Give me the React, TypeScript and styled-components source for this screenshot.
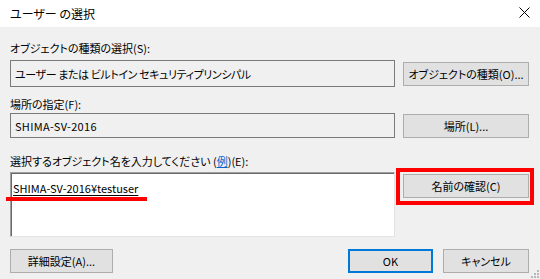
import React from 'react';
import styled, { createGlobalStyle, css } from 'styled-components';

const GlobalStyle = createGlobalStyle`
  html, body {
    margin: 0;
    padding: 0;
    background: #f0f0f0;
  }
  body {
    font-family: 'Noto Sans CJK JP', sans-serif;
    font-size: 11px;
    font-feature-settings: 'palt';
    color: #000;
  }
`;

const Window = styled.div`
  position: relative;
  width: 540px;
  height: 279px;
  background: #f0f0f0;
  overflow: hidden;
`;

const TitleBar = styled.div`
  display: flex;
  align-items: center;
  justify-content: space-between;
  height: 27px;
  padding: 0 8px 0 10px;
  background: #fff;
`;

const Title = styled.div`
  font-size: 12px;
  line-height: 16px;
`;

const CloseButton = styled.div`
  display: flex;
  align-items: center;
  justify-content: center;
  width: 16px;
  height: 16px;
  margin-top: -3px;
`;

const Body = styled.div`
  display: flex;
  flex-direction: column;
  padding: 0 11px 0 10px;
`;

const Field = styled.div<{ top: number }>`
  display: flex;
  flex-direction: column;
  margin-top: ${(p) => p.top}px;
`;

const Label = styled.div<{ gap: number }>`
  height: 16px;
  line-height: 16px;
  white-space: nowrap;
  margin-bottom: ${(p) => p.gap}px;
`;

const Row = styled.div`
  display: grid;
  grid-template-columns: 385px 126px;
  column-gap: 8px;
  align-items: center;
`;

const ReadOnlyBox = styled.div<{ h: number; spacing?: number }>`
  box-sizing: border-box;
  height: ${(p) => p.h}px;
  padding: 0 4px;
  display: flex;
  align-items: center;
  white-space: nowrap;
  letter-spacing: ${(p) => p.spacing ?? 0}px;
  border: 1px solid #7a7a7a;
  background: #f0f0f0;
`;

const InputBox = styled.div`
  position: relative;
  box-sizing: border-box;
  height: 65px;
  padding: 7px 3px 0 2px;
  background: #fff;
  border-top: 1px solid #a0a0a0;
  border-left: 1px solid #a0a0a0;
  border-right: 1px solid #e3e3e3;
  border-bottom: 1px solid #e3e3e3;
  box-shadow: inset 1px 1px 0 #696969;
`;

const ResolvedName = styled.span`
  text-decoration: underline;
  text-underline-offset: 2px;
`;

const RedUnderline = styled.div`
  position: absolute;
  left: -5px;
  top: 24px;
  width: 141px;
  height: 4px;
  background: #ff0000;
`;

const Button = styled.div<{ primary?: boolean; w?: number }>`
  position: relative;
  box-sizing: border-box;
  height: 24px;
  width: ${(p) => (p.w ? `${p.w}px` : 'auto')};
  display: flex;
  align-items: center;
  justify-content: center;
  white-space: nowrap;
  background: #e1e1e1;
  border: 1px solid #adadad;
  ${(p) =>
    p.primary &&
    css`
      border: 2px solid #0078d7;
    `}
`;

const RightTop = styled.div`
  align-self: start;
  margin-top: 2px;
`;

const Highlight = styled.div`
  position: absolute;
  left: -8px;
  right: -6px;
  top: -7px;
  bottom: -8px;
  border: 4px solid #ff0000;
  box-sizing: border-box;
  pointer-events: none;
`;

const Link = styled.span`
  color: #0066cc;
  text-decoration: underline;
`;

const Footer = styled.div`
  display: flex;
  align-items: center;
  margin-top: 12px;
`;

const Spacer = styled.div`
  flex: 1;
`;

const FooterRight = styled.div`
  display: flex;
  gap: 10px;
`;

const Grip = styled.svg`
  position: absolute;
  right: 1px;
  bottom: 1px;
`;

export default function App() {
  return (
    <>
      <GlobalStyle />
      <Window>
        <TitleBar>
          <Title>ユーザー の選択</Title>
          <CloseButton>
            <svg width="11" height="11" viewBox="0 0 11 11">
              <path d="M0.5 0.5 L10.5 10.5 M10.5 0.5 L0.5 10.5" stroke="#000" strokeWidth="1" fill="none" />
            </svg>
          </CloseButton>
        </TitleBar>
        <Body>
          <Field top={13}>
            <Label gap={4}>オブジェクトの種類の選択(S):</Label>
            <Row>
              <ReadOnlyBox h={27} spacing={-0.4}>
                ユーザー または ビルトイン セキュリティプリンシパル
              </ReadOnlyBox>
              <Button>オブジェクトの種類(O)...</Button>
            </Row>
          </Field>
          <Field top={9}>
            <Label gap={1}>場所の指定(F):</Label>
            <Row>
              <ReadOnlyBox h={25} spacing={0.3}>
                SHIMA-SV-2016
              </ReadOnlyBox>
              <Button>場所(L)...</Button>
            </Row>
          </Field>
          <Field top={15}>
            <Label gap={3}>
              選択するオブジェクト名を入力してください (<Link>例</Link>)(E):
            </Label>
            <Row>
              <InputBox>
                <ResolvedName>SHIMA-SV-2016¥testuser</ResolvedName>
                <RedUnderline />
              </InputBox>
              <RightTop>
                <Button>
                  名前の確認(C)
                  <Highlight />
                </Button>
              </RightTop>
            </Row>
          </Field>
          <Footer>
            <Button w={103}>詳細設定(A)...</Button>
            <Spacer />
            <FooterRight>
              <Button primary w={85}>OK</Button>
              <Button w={86}>キャンセル</Button>
            </FooterRight>
          </Footer>
        </Body>
        <Grip width="8" height="8" viewBox="0 0 8 8">
          <rect x="6" y="0" width="2" height="2" fill="#b8b8b8" />
          <rect x="3" y="3" width="2" height="2" fill="#b8b8b8" />
          <rect x="6" y="3" width="2" height="2" fill="#b8b8b8" />
          <rect x="0" y="6" width="2" height="2" fill="#b8b8b8" />
          <rect x="3" y="6" width="2" height="2" fill="#b8b8b8" />
          <rect x="6" y="6" width="2" height="2" fill="#b8b8b8" />
        </Grip>
      </Window>
    </>
  );
}
